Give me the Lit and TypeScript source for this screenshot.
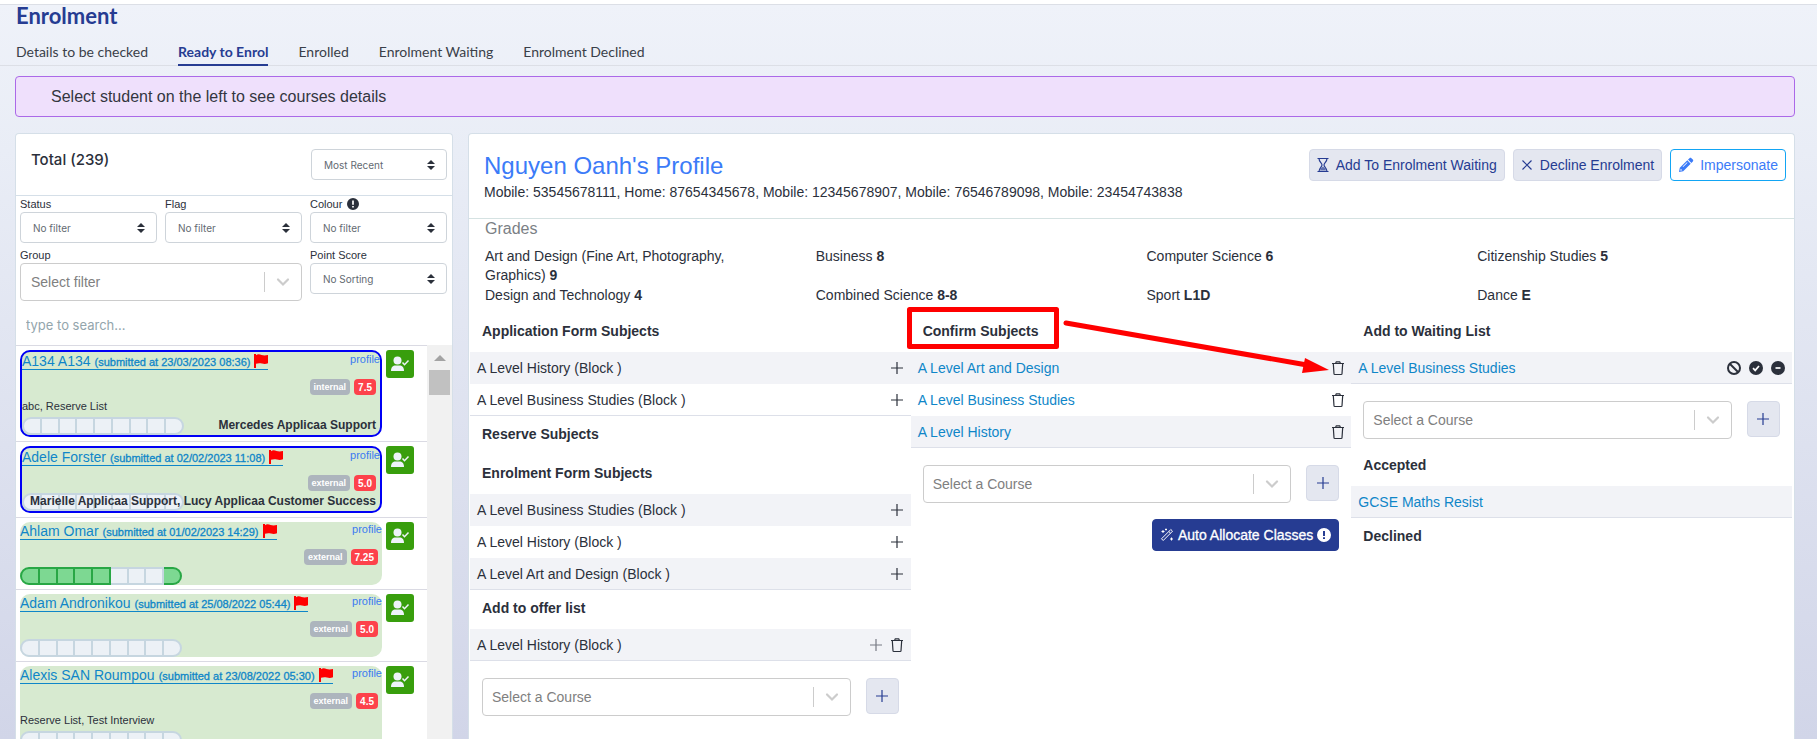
import { LitElement, html, css, nothing } from "lit";
import { customElement, property } from "lit/decorators.js";

const plusIcon = html`<svg class="ico" viewBox="0 0 14 14" width="14" height="14" aria-hidden="true">
  <path d="M7 1v12M1 7h12" fill="none" stroke="currentColor" stroke-width="1.2" /></svg>`;

const trashIcon = html`<svg class="ico" viewBox="0 0 14 16" width="14" height="16" aria-hidden="true">
  <path d="M1 3.5h12M4.5 3.5l.8-1.7h3.4l.8 1.7M2.3 3.5l.7 10.2c0 .5.4.8.9.8h6.2c.5 0 .9-.3.9-.8l.7-10.2"
    fill="none" stroke="currentColor" stroke-width="1.2" /></svg>`;

const infoIcon = (size: number) => html`<svg class="ico" viewBox="0 0 14 14" width=${size} height=${size} aria-hidden="true">
  <path fill="currentColor" fill-rule="evenodd"
    d="M7 0a7 7 0 1 1 0 14A7 7 0 0 1 7 0zM6 3v5h2V3zM6 9.3v1.8h2V9.3z" /></svg>`;

const flagIcon = html`<svg class="flag" viewBox="0 0 14 14" width="14" height="14" aria-hidden="true">
  <path fill="#ff0000" d="M0 0h2v1.200C4-.3 6 .5 7.500 1c2 .6 4 .6 6.500 0v8.300c-2 .8-4 .8-6 .3-2-.6-4-.6-6 .2V14H0z" /></svg>`;

const userCheckIcon = html`<svg viewBox="0 0 20 16" width="20" height="16" aria-hidden="true">
  <circle cx="7.500" cy="4.500" r="4" fill="#eef3fa" />
  <path d="M1 15c0-4 2-5.500 4.500-5.500h4c2.500 0 4.500 1.500 4.500 5.500z" fill="#eef3fa" />
  <path d="M12.500 6.500l2 2.200 4-4.200" fill="none" stroke="#eef3fa" stroke-width="1.500" /></svg>`;

interface Student {
  name: string;
  date: string;
  kind: string;
  score: string;
  tags?: string;
  staff?: string;
  outlined?: boolean;
  steps?: number[];
}

const students: Student[] = [
  { name: "A134 A134", date: "23/03/2023 08:36", kind: "internal", score: "7.5", tags: "abc, Reserve List", staff: "Mercedes Applicaa Support", outlined: true },
  { name: "Adele Forster", date: "02/02/2023 11:08", kind: "external", score: "5.0", staff: "Marielle Applicaa Support, Lucy Applicaa Customer Success", outlined: true },
  { name: "Ahlam Omar", date: "01/02/2023 14:29", kind: "external", score: "7.25", steps: [0, 1, 2, 3, 4, 8] },
  { name: "Adam Andronikou", date: "25/08/2022 05:44", kind: "external", score: "5.0" },
  { name: "Alexis SAN Roumpou", date: "23/08/2022 05:30", kind: "external", score: "4.5", tags: "Reserve List, Test Interview" },
];

@customElement("student-item")
export class StudentItem extends LitElement {
  @property({ attribute: false }) student!: Student;

  static styles = css`
    :host { display: flex; gap: 4px; padding: 4px 13px 4px 4px; border-bottom: 1px solid #dadae3; flex: none; }
    .box { position: relative; flex: 1; min-width: 0; box-sizing: border-box; background: #d7ead0; border-radius: 10px; }
    .box.outlined { border: 2px solid #0000f5; }
    .top { display: flex; justify-content: space-between; align-items: flex-start; height: 18px; margin-bottom: 9px; }
    .name { display: flex; align-items: center; gap: 4px; height: 17px; font-size: 14px; color: #0f86c8; border-bottom: 1px solid #0f86c8; text-decoration: none; white-space: nowrap; }
    .name small { font-size: 11px; -webkit-text-stroke: 0.3px #0f86c8; padding-top: 2px; }
    .profile { font-size: 11px; line-height: 14px; color: #3b7bf0; text-decoration: none; }
    .badges { display: flex; justify-content: flex-end; gap: 4px; height: 16px; padding-right: 4px; margin-bottom: 2px; }
    .badge { border-radius: 4px; padding: 0 4px; font-size: 9px; font-weight: 700; line-height: 17px; color: #fff; background: #adb5bd; }
    .badge.score { background: #fd424b; font-size: 10px; }
    .tags { font-size: 11px; line-height: 18px; margin-bottom: 2px; }
    .bar { display: flex; width: 162px; height: 18px; box-sizing: border-box; }
    .step { flex: 1; box-sizing: border-box; background: #ecf1f6; border: 2px solid #c6d6e0; border-left-width: 0; }
    .step:first-child { border-left-width: 2px; border-radius: 9px 0 0 9px; }
    .step:last-child { border-radius: 0 9px 9px 0; }
    .step.done { background: #7dd892; border-color: #28a745; }
    .staff { position: absolute; right: 4px; bottom: 2px; font-size: 12px; font-weight: 700; line-height: 16px; white-space: nowrap; }
    .accept { display: flex; align-items: center; justify-content: center; width: 28px; height: 28px; padding: 0; border: 0; border-radius: 3px; background: #389e0d; }
  `;

  render() {
    const s = this.student;
    return html`
      <div class="box ${s.outlined ? "outlined" : ""}">
        <div class="top">
          <a class="name" href="#">${s.name} <small>(submitted at ${s.date})</small>${flagIcon}</a>
          <a class="profile" href="#">profile</a>
        </div>
        <div class="badges"><span class="badge">${s.kind}</span><span class="badge score">${s.score}</span></div>
        ${s.tags ? html`<div class="tags">${s.tags}</div>` : nothing}
        <div class="bar">${Array.from({ length: 9 }, (_, i) => html`<span class="step ${s.steps?.includes(i) ? "done" : ""}"></span>`)}</div>
        ${s.staff ? html`<div class="staff">${s.staff}</div>` : nothing}
      </div>
      <button class="accept" aria-label="Enrol ${s.name}">${userCheckIcon}</button>`;
  }
}

@customElement("course-picker")
export class CoursePicker extends LitElement {
  static styles = css`
    :host { display: flex; align-items: flex-start; gap: 15px; padding: 17px 12px 8px 12px; }
    .combo { display: flex; align-items: center; flex: 1; min-width: 0; height: 38px; box-sizing: border-box; border: 1px solid #ccc; border-radius: 4px; background: #fff; padding-left: 9px; }
    .combo input { flex: 1; min-width: 0; border: 0; padding: 0; outline: 0; background: none; font: 14px "Liberation Sans", Arial, sans-serif; }
    .combo input::placeholder { color: #808080; opacity: 1; }
    .sep { width: 1px; height: 20px; background: #ccc; }
    .chev { width: 36px; display: flex; justify-content: center; }
    button { width: 33px; height: 36px; padding: 0; border: 1px solid #d6dae7; border-radius: 4px; background: #e4e7f0; color: #263c92; display: flex; align-items: center; justify-content: center; }
  `;

  render() {
    return html`
      <div class="combo">
        <input aria-label="Select a Course" placeholder="Select a Course" />
        <span class="sep"></span>
        <span class="chev"><svg viewBox="0 0 14 10" width="14" height="10" aria-hidden="true"><path d="M2 2.500l5 5 5-5" fill="none" stroke="#ccc" stroke-width="2.200" stroke-linecap="round" /></svg></span>
      </div>
      <button aria-label="Add course">${plusIcon}</button>`;
  }
}

@customElement("app-root")
export class AppRoot extends LitElement {
  static styles = css`
    :host { display: flex; flex-direction: column; height: 100vh; overflow: hidden; box-sizing: border-box; border-top: 4px solid #fff; background: linear-gradient(#eff2f9, #e9edf6 20%, #d1d5e8); font-family: "Liberation Sans", Arial, sans-serif; font-size: 14px; color: #2b303b; }
    .page-head { border-top: 1px solid #dcdfe6; border-bottom: 1px solid #dcdfe6; padding: 0 16px; }
    h1 { margin: 0; font: 700 22px/22px Lato, sans-serif; color: #263c92; }
    .tabs { display: flex; gap: 30px; padding-top: 12px; }
    .tab { font: 14px/25px Lato, sans-serif; color: #3a3f49; text-decoration: none; white-space: nowrap; }
    .tab.active { font-weight: 700; color: #263c92; border-bottom: 2px solid #263c92; margin-bottom: -1px; }
    .notice { margin: 10px 22px 16px 15px; padding: 10px 35px; border: 1px solid #ab69e8; border-radius: 4px; background: #efe0fc; font-size: 16px; line-height: 19px; color: #33363f; flex: none; }
    .cols { display: flex; gap: 15px; flex: 1; min-height: 0; padding: 0 22px 0 15px; }
    .card { background: #fff; border: 1px solid #d5dfe8; border-bottom: 0; border-radius: 4px 4px 0 0; box-sizing: border-box; }

    .side { width: 438px; flex: none; display: flex; flex-direction: column; min-height: 0; }
    .side-head { display: flex; justify-content: space-between; align-items: flex-start; border-bottom: 1px solid #d5dfe8; padding: 15px 5px 15px 15px; }
    h2 { margin: 0; font: 500 15px/22px Inter, sans-serif; }
    .filters { display: grid; grid-template-columns: repeat(3, minmax(0, 1fr)); column-gap: 8px; padding: 0 5px 0 4px; }
    .wide { grid-column: span 2; }
    label { display: flex; align-items: center; gap: 5px; font-size: 11px; line-height: 16px; height: 16px; }
    .field { display: flex; flex-direction: column; padding-bottom: 4px; }
    .select { position: relative; display: flex; align-items: center; }
    .select svg { position: absolute; right: 12px; pointer-events: none; }
    select { appearance: none; width: 100%; height: 31px; box-sizing: border-box; border: 1px solid #ced4da; border-radius: 4px; background: #fff; padding: 0 12px; font: 10px Inter, sans-serif; color: #636a72; }
    .side-head .select { width: 136px; }
    .combo { display: flex; align-items: center; height: 38px; box-sizing: border-box; border: 1px solid #ccc; border-radius: 4px; padding-left: 10px; }
    .combo input { flex: 1; min-width: 0; border: 0; padding: 0; background: none; font: 14px "Liberation Sans", Arial, sans-serif; }
    .combo input::placeholder { color: #808080; opacity: 1; }
    .sep { width: 1px; height: 20px; background: #ccc; }
    .chev { width: 36px; display: flex; justify-content: center; }
    .search { border: 0; margin: 8px 10px; padding: 0; height: 24px; font: 13px Inter, sans-serif; background: none; }
    .search::placeholder { color: #93a5ac; opacity: 1; }
    .list { display: flex; flex: 1; min-height: 0; }
    .items { flex: 1; min-width: 0; border-top: 1px solid #dadae3; overflow: hidden; display: flex; flex-direction: column; }
    .scroll { width: 25px; background: #f1f1f1; display: flex; flex-direction: column; align-items: center; padding-top: 10px; box-sizing: border-box; }
    .arrow { border: 6px solid transparent; border-top: 0; border-bottom-color: #a3a3a3; margin-bottom: 9px; }
    .thumb { width: 21px; height: 25px; background: #c1c1c1; }

    .main { flex: 1; min-width: 0; }
    .main-head { display: flex; justify-content: space-between; align-items: flex-start; padding: 15px 8px 16px 15px; border-bottom: 1px solid #d5e2e2; }
    .title { display: block; font-size: 24px; line-height: 34px; color: #3b7bf8; text-decoration: none; }
    .phones { line-height: 19px; }
    .actions { display: flex; gap: 8px; }
    .btn { display: flex; align-items: center; gap: 7px; height: 32px; box-sizing: border-box; padding: 0 7px; border: 1px solid #d6dae7; border-radius: 4px; background: #e4e7f0; color: #263c92; font: 14px "Liberation Sans", Arial, sans-serif; white-space: nowrap; }
    .btn.outline { background: #fff; border-color: #12a5f4; color: #3b7bf8; gap: 6px; }
    .btn.solid { background: #263c92; border-color: #263c92; color: #fff; gap: 4px; -webkit-text-stroke: 0.3px #fff; }
    h3 { margin: 0; padding: 0 16px; font: 16px/20px "Liberation Sans", Arial, sans-serif; color: #7b7f85; }
    .grades { display: grid; grid-template-columns: repeat(4, 1fr); row-gap: 1px; padding: 8px 0 8px 2px; line-height: 19px; }
    .grade { padding: 0 45px 0 14px; }
    .subjects { display: grid; grid-template-columns: repeat(3, minmax(0, 1fr)); padding: 0 2px 0 1px; }
    h4 { margin: 0; height: 39px; box-sizing: border-box; padding: 8px 12px 0; font: 700 14px/20px "Liberation Sans", Arial, sans-serif; position: relative; }
    .rows { list-style: none; margin: 0; padding: 0; }
    .row { display: flex; align-items: center; gap: 6px; height: 32px; box-sizing: border-box; padding: 0 6px 0 7px; }
    .row:nth-child(odd) { background: #f2f3f7; }
    .row:last-child { border-bottom: 1px solid #dde0e9; }
    .row .grow { flex: 1; }
    .row a { color: #0f86c8; text-decoration: none; }
    .row button { border: 0; background: none; padding: 0; width: 15px; height: 16px; color: inherit; display: flex; align-items: center; justify-content: center; }
    .row .muted { color: #777b84; }
    .row.states { gap: 7px; }
    .auto { display: flex; justify-content: flex-end; padding: 8px 12px; }
    .mark { position: absolute; left: -4px; top: -6px; width: 425px; height: 70px; overflow: visible; pointer-events: none; }
  `;

  private arrows() {
    return html`<svg viewBox="0 0 8 12" width="8" height="12" aria-hidden="true"><path fill="#2b303b" d="M4 1l4 4H0zM4 11l4-4H0z" /></svg>`;
  }

  private select(id: string, value: string) {
    return html`<div class="select"><select id=${id} aria-label=${value}><option>${value}</option></select>${this.arrows()}</div>`;
  }

  private field(id: string, label: string, value: string, info = false) {
    return html`<div class="field"><label for=${id}>${label}${info ? infoIcon(12) : nothing}</label>${this.select(id, value)}</div>`;
  }

  private addRows(names: string[]) {
    return html`<ul class="rows">${names.map((n) => html`<li class="row"><span class="grow">${n} (Block )</span><button aria-label="Add ${n}">${plusIcon}</button></li>`)}</ul>`;
  }

  render() {
    return html`
      <header class="page-head">
        <h1>Enrolment</h1>
        <nav class="tabs">
          ${["Details to be checked", "Ready to Enrol", "Enrolled", "Enrolment Waiting", "Enrolment Declined"].map(
            (t, i) => html`<a class="tab ${i === 1 ? "active" : ""}" href="#">${t}</a>`
          )}
        </nav>
      </header>
      <div class="notice">Select student on the left to see courses details</div>
      <div class="cols">
        <aside class="card side">
          <div class="side-head"><h2>Total (239)</h2>${this.select("order", "Most Recent")}</div>
          <div class="filters">
            ${this.field("status", "Status", "No filter")}
            ${this.field("flag", "Flag", "No filter")}
            ${this.field("colour", "Colour", "No filter", true)}
            <div class="field wide">
              <label for="group">Group</label>
              <div class="combo"><input id="group" placeholder="Select filter" /><span class="sep"></span>
                <span class="chev"><svg viewBox="0 0 14 10" width="14" height="10" aria-hidden="true"><path d="M2 2.500l5 5 5-5" fill="none" stroke="#ccc" stroke-width="2.200" stroke-linecap="round" /></svg></span>
              </div>
            </div>
            ${this.field("points", "Point Score", "No Sorting")}
          </div>
          <input class="search" aria-label="Search students" placeholder="type to search..." />
          <div class="list">
            <div class="items">${students.map((s) => html`<student-item .student=${s}></student-item>`)}</div>
            <div class="scroll"><span class="arrow"></span><span class="thumb"></span></div>
          </div>
        </aside>

        <main class="card main">
          <div class="main-head">
            <div>
              <a class="title" href="#">Nguyen Oanh's Profile</a>
              <div class="phones">Mobile: 53545678111, Home: 87654345678, Mobile: 12345678907, Mobile: 76546789098, Mobile: 23454743838</div>
            </div>
            <div class="actions">
              <button class="btn"><svg viewBox="0 0 12 16" width="12" height="16" aria-hidden="true"><path d="M.5 1.500h11M.5 14.500h11M2 1.500c0 3.500 3 4.500 3 6.500s-3 3-3 6.500M10 1.500c0 3.500-3 4.500-3 6.500s3 3 3 6.500" fill="none" stroke="currentColor" stroke-width="1.200" /><path d="M3 13.500c.5-2.500 2-3 3-4 1 1 2.500 1.500 3 4z" fill="currentColor" opacity=".7" /></svg>Add To Enrolment Waiting</button>
              <button class="btn"><svg viewBox="0 0 12 12" width="12" height="12" aria-hidden="true"><path d="M1.500 1.500l9 9M10.500 1.500l-9 9" fill="none" stroke="currentColor" stroke-width="1.200" /></svg>Decline Enrolment</button>
              <button class="btn outline"><svg viewBox="0 0 16 16" width="16" height="16" aria-hidden="true"><path fill="currentColor" fill-rule="evenodd" d="M11.500 1.200c.6-.6 1.300-.6 1.900 0l1.400 1.400c.6.6.6 1.300 0 1.900L13.400 6 10 2.600zM9.300 3.300l3.400 3.400-7.500 7.500L1 15l.8-4.200zM9 5.200L4.600 9.600l.5.5 4.400-4.400zM2.700 11.700l-.4 2 2-.4z" /></svg>Impersonate</button>
            </div>
          </div>
          <h3>Grades</h3>
          <div class="grades">
            ${[
              ["Art and Design (Fine Art, Photography, Graphics)", "9"], ["Business", "8"], ["Computer Science", "6"], ["Citizenship Studies", "5"],
              ["Design and Technology", "4"], ["Combined Science", "8-8"], ["Sport", "L1D"], ["Dance", "E"],
            ].map(([n, g]) => html`<div class="grade">${n} <b>${g}</b></div>`)}
          </div>
          <div class="subjects">
            <section>
              <h4>Application Form Subjects</h4>
              ${this.addRows(["A Level History", "A Level Business Studies"])}
              <h4>Reserve Subjects</h4>
              <h4>Enrolment Form Subjects</h4>
              ${this.addRows(["A Level Business Studies", "A Level History", "A Level Art and Design"])}
              <h4>Add to offer list</h4>
              <ul class="rows"><li class="row"><span class="grow">A Level History (Block )</span><button class="muted" aria-label="Add">${plusIcon}</button><button aria-label="Delete">${trashIcon}</button></li></ul>
              <course-picker></course-picker>
            </section>
            <section>
              <h4>Confirm Subjects
                <svg class="mark" viewBox="0 0 425 70" aria-hidden="true">
                  <rect x="2.500" y="2.500" width="147" height="37" fill="none" stroke="#ff0000" stroke-width="5" stroke-linejoin="round" />
                  <path d="M159 16L400 58" stroke="#ff0000" stroke-width="5" stroke-linecap="round" />
                  <path d="M398 51l24 12-27 3z" fill="#ff0000" />
                </svg>
              </h4>
              <ul class="rows">
                ${["A Level Art and Design", "A Level Business Studies", "A Level History"].map((n) => html`<li class="row"><a class="grow" href="#">${n}</a><button aria-label="Delete ${n}">${trashIcon}</button></li>`)}
              </ul>
              <course-picker></course-picker>
              <div class="auto">
                <button class="btn solid"><svg viewBox="0 0 14 14" width="14" height="14" aria-hidden="true"><path d="M1.500 10.800L10.800 1.500l1.700 1.700-9.300 9.300zM8.800 3.500l1.700 1.700M3 2v3M1.500 3.500h3M11.500 9.500v3M10 11h3M6 .5v2M5 1.500h2" fill="none" stroke="currentColor" /></svg>Auto Allocate Classes ${infoIcon(14)}</button>
              </div>
            </section>
            <section>
              <h4>Add to Waiting List</h4>
              <ul class="rows"><li class="row states"><a class="grow" href="#">A Level Business Studies</a>
                <button aria-label="Reject"><svg viewBox="0 0 14 14" width="14" height="14"><circle cx="7" cy="7" r="6" fill="none" stroke="currentColor" stroke-width="2" /><path d="M3 3l8 8" stroke="currentColor" stroke-width="2" /></svg></button>
                <button aria-label="Accept"><svg viewBox="0 0 14 14" width="14" height="14"><circle cx="7" cy="7" r="7" fill="currentColor" /><path d="M4 7.200l2.200 2.200L10 5" fill="none" stroke="#fff" stroke-width="1.700" /></svg></button>
                <button aria-label="Remove"><svg viewBox="0 0 14 14" width="14" height="14"><circle cx="7" cy="7" r="7" fill="currentColor" /><path d="M4.500 7h5" stroke="#fff" stroke-width="1.700" /></svg></button>
              </li></ul>
              <course-picker></course-picker>
              <h4>Accepted</h4>
              <ul class="rows"><li class="row"><a class="grow" href="#">GCSE Maths Resist</a></li></ul>
              <h4>Declined</h4>
            </section>
          </div>
        </main>
      </div>`;
  }
}
